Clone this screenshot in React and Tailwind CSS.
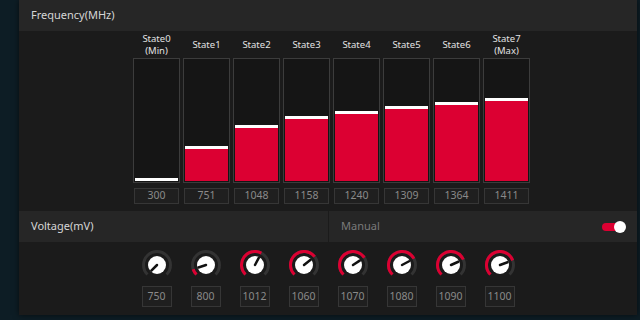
import React from "react";

const states = [
  { label: ["State0", "(Min)"], value: 300, fill: 3 },
  { label: ["State1"], value: 751, fill: 35 },
  { label: ["State2"], value: 1048, fill: 56 },
  { label: ["State3"], value: 1158, fill: 65 },
  { label: ["State4"], value: 1240, fill: 70 },
  { label: ["State5"], value: 1309, fill: 75 },
  { label: ["State6"], value: 1364, fill: 79 },
  { label: ["State7", "(Max)"], value: 1411, fill: 83 },
];

const voltages = [
  { value: 750, angle: -135 },
  { value: 800, angle: -108 },
  { value: 1012, angle: 28 },
  { value: 1060, angle: 52 },
  { value: 1070, angle: 57 },
  { value: 1080, angle: 62 },
  { value: 1090, angle: 66 },
  { value: 1100, angle: 70 },
];

function pt(r, deg) {
  const a = (deg * Math.PI) / 180;
  return [15 + r * Math.sin(a), 15 - r * Math.cos(a)];
}

function arc(r, from, to) {
  const [x1, y1] = pt(r, from);
  const [x2, y2] = pt(r, to);
  const large = to - from > 180 ? 1 : 0;
  return `M ${x1} ${y1} A ${r} ${r} 0 ${large} 1 ${x2} ${y2}`;
}

function Knob({ angle }) {
  const [tx, ty] = pt(8, angle);
  return (
    <svg width="30" height="30" viewBox="0 0 30 30">
      <path d={arc(13.5, -135, 135)} stroke="#333333" strokeWidth="3" fill="none" />
      {angle > -130 && (
        <path d={arc(13.5, -135, angle)} stroke="#dc0032" strokeWidth="3" fill="none" />
      )}
      <circle cx="15" cy="15" r="9" fill="#ffffff" />
      <line x1="15" y1="15" x2={tx} y2={ty} stroke="#111111" strokeWidth="2.5" strokeLinecap="round" />
    </svg>
  );
}

export default function App() {
  return (
    <div
      className="w-[640px] h-[320px] overflow-hidden bg-[#0d1d25] text-[#d6d6d6]"
      style={{ fontFamily: '"Noto Sans", "Open Sans", sans-serif' }}
    >
      <div className="ml-[19px] w-[618px] flex flex-col shadow-[0_0_6px_rgba(0,0,0,0.6)]">
        {/* Frequency */}
        <div className="h-[31px] bg-[#262626] flex items-center pl-[12px] text-[11px]">
          Frequency(MHz)
        </div>
        <div className="h-[180px] bg-[#1b1b1b] pl-[114px] pt-[1px] flex gap-[3px]">
          {states.map((s) => (
            <div key={s.value} className="w-[47px] flex flex-col items-center">
              <div className="h-[26px] flex flex-col items-center justify-center text-[9.5px] leading-[12px] text-[#e2e2e2]">
                {s.label.map((l) => (
                  <span key={l}>{l}</span>
                ))}
              </div>
              <div className="w-[47px] h-[125px] border border-[#3c3c3c] bg-[#151515] p-px flex flex-col justify-end">
                <div className="w-full bg-[#dc0032] border-t-[3px] border-white" style={{ height: s.fill }} />
              </div>
              <div className="mt-[5px] w-[45px] h-[16px] border border-[#363636] bg-[#1f1f1f] flex items-center justify-center text-[10.5px] text-[#8a8a8a]">
                {s.value}
              </div>
            </div>
          ))}
        </div>

        {/* Voltage */}
        <div className="h-[31px] flex text-[11px]">
          <div className="w-[309px] bg-[#262626] flex items-center pl-[12px]">Voltage(mV)</div>
          <div className="w-px bg-[#1b1b1b]" />
          <div className="flex-1 bg-[#262626] flex items-center justify-between pl-[12px] pr-[11px] text-[#7a7a7a]">
            <span>Manual</span>
            <div className="relative w-[24px] h-[12px] flex items-center">
              <div className="w-[19px] h-[8px] rounded-full bg-[#dc0032]" />
              <div className="absolute right-0 top-0 w-[12px] h-[12px] rounded-full bg-white" />
            </div>
          </div>
        </div>
        <div className="h-[73px] bg-[#1b1b1b] pl-[113px] pt-[8px] flex">
          {voltages.map((v) => (
            <div key={v.value} className="w-[49px] flex flex-col items-center">
              <Knob angle={v.angle} />
              <div className="mt-[6px] w-[30px] h-[21px] border border-[#363636] bg-[#1f1f1f] flex items-center justify-center text-[10.5px] text-[#8a8a8a]">
                {v.value}
              </div>
            </div>
          ))}
        </div>
      </div>
    </div>
  );
}
